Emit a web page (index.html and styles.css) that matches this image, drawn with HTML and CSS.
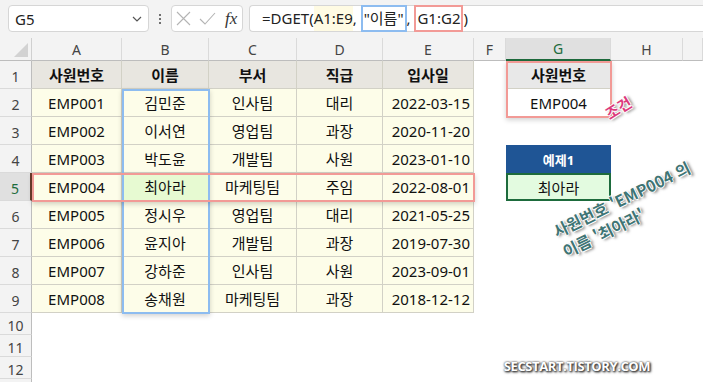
FILE: index.html
```html
<!DOCTYPE html>
<html lang="ko">
<head>
    <meta charset="UTF-8">
    <meta name="viewport" content="width=device-width">
    <title>DGET 예제</title>
    <link rel="stylesheet" href="styles.css">
</head>
<body>
<div id="app">
    <div class="toolbar">
        <div class="name-box">
            <span>G5</span>
            <svg class="chev" width="10" height="6" viewBox="0 0 10 6"><polyline points="1,1 5,5 9,1" fill="none" stroke="#555" stroke-width="1.2"/></svg>
        </div>
        <div class="dots"><span></span><span></span><span></span></div>
        <div class="fx-box">
            <svg width="15" height="15" viewBox="0 0 15 15"><path d="M1 1L14 14M14 1L1 14" stroke="#b4b4b4" stroke-width="1.1" fill="none"/></svg>
            <svg width="17" height="13" viewBox="0 0 17 13"><polyline points="1,7 6,12 16,1" stroke="#b4b4b4" stroke-width="1.1" fill="none"/></svg>
            <span class="fx">fx</span>
        </div>
        <div class="formula">
            <span>=DGET(</span><span class="ref-a">A1:E9</span><span>,&nbsp;</span><span class="ref-b">"이름"</span><span>,&nbsp;</span><span class="ref-g">G1:G2</span><span>)</span>
        </div>
    </div>

    <div class="sheet">
        <div class="corner"></div>
        <div class="ch">A</div><div class="ch">B</div><div class="ch">C</div><div class="ch">D</div><div class="ch">E</div>
        <div class="ch">F</div><div class="ch ch-sel">G</div><div class="ch">H</div><div class="ch"></div>

        <div class="rh">1</div>
        <div class="th">사원번호</div><div class="th">이름</div><div class="th">부서</div><div class="th">직급</div><div class="th">입사일</div>
        <div class="e"></div><div class="th th-g">사원번호</div><div class="e"></div><div class="e"></div>

        <div class="rh">2</div>
        <div class="td">EMP001</div><div class="td">김민준</div><div class="td">인사팀</div><div class="td">대리</div><div class="td dt">2022-03-15</div>
        <div class="e"></div><div class="crit">EMP004</div><div class="e"></div><div class="e"></div>

        <div class="rh">3</div>
        <div class="td">EMP002</div><div class="td">이서연</div><div class="td">영업팀</div><div class="td">과장</div><div class="td dt">2020-11-20</div>
        <div class="e"></div><div class="e"></div><div class="e"></div><div class="e"></div>

        <div class="rh">4</div>
        <div class="td">EMP003</div><div class="td">박도윤</div><div class="td">개발팀</div><div class="td">사원</div><div class="td dt">2023-01-10</div>
        <div class="e"></div><div class="res-h">예제1</div><div class="e"></div><div class="e"></div>

        <div class="rh rh-sel">5</div>
        <div class="td">EMP004</div><div class="td hit">최아라</div><div class="td">마케팅팀</div><div class="td">주임</div><div class="td dt">2022-08-01</div>
        <div class="e"></div><div class="res-v">최아라</div><div class="e"></div><div class="e"></div>

        <div class="rh">6</div>
        <div class="td">EMP005</div><div class="td">정시우</div><div class="td">영업팀</div><div class="td">대리</div><div class="td dt">2021-05-25</div>
        <div class="e"></div><div class="e"></div><div class="e"></div><div class="e"></div>

        <div class="rh">7</div>
        <div class="td">EMP006</div><div class="td">윤지아</div><div class="td">개발팀</div><div class="td">과장</div><div class="td dt">2019-07-30</div>
        <div class="e"></div><div class="e"></div><div class="e"></div><div class="e"></div>

        <div class="rh">8</div>
        <div class="td">EMP007</div><div class="td">강하준</div><div class="td">인사팀</div><div class="td">사원</div><div class="td dt">2023-09-01</div>
        <div class="e"></div><div class="e"></div><div class="e"></div><div class="e"></div>

        <div class="rh">9</div>
        <div class="td">EMP008</div><div class="td">송채원</div><div class="td">마케팅팀</div><div class="td">과장</div><div class="td dt">2018-12-12</div>
        <div class="e"></div><div class="e"></div><div class="e"></div><div class="e"></div>

        <div class="rh">10</div><div class="blank"></div>
        <div class="rh">11</div><div class="blank"></div>
        <div class="rh">12</div><div class="blank"></div>
        <div class="rh"></div><div class="blank"></div>
    </div>

    <!-- 선택 범위 표시 -->
    <div class="box box-name"></div>
    <div class="box box-row"></div>
    <div class="box box-crit"></div>

    <div class="tag-cond">조건</div>
    <div class="note">사원번호 'EMP004 의<br>이름 '최아라'</div>
    <div class="mark">SECSTART.TISTORY.COM</div>
</div>
</body>
</html>
```

FILE: styles.css
```css
*{
    margin: 0;
    padding: 0;
    box-sizing: border-box;
}
html,body{
    width: 100%;
    height: 100%;
    overflow: hidden;
    background: #fff;
}
#app{
    position: relative;
    width: 100%;
    height: 100%;
    font-family: "Noto Sans", "Noto Sans CJK KR", sans-serif;
    color: #111;
}

/* 수식 입력줄 */
.toolbar{
    height: 38px;
    background: #f3f3f3;
    display: flex;
    align-items: flex-start;
    padding: 5px 0 0 8px;
}
.name-box{
    width: 141px;
    height: 27px;
    background: #fff;
    border: 1px solid #d6d6d6;
    border-radius: 4px;
    display: flex;
    align-items: center;
    justify-content: space-between;
    padding: 0 6px 0 6px;
    font-size: 15px;
    color: #222;
}
.dots{
    width: 22px;
    height: 27px;
    display: flex;
    flex-direction: column;
    align-items: center;
    justify-content: center;
    gap: 2px;
}
.dots span{
    width: 2px;
    height: 2px;
    background: #444;
    border-radius: 50%;
}
.fx-box{
    width: 72px;
    height: 27px;
    background: #fff;
    border: 1px solid #d6d6d6;
    border-radius: 4px;
    display: flex;
    align-items: center;
    gap: 8px;
    padding-left: 4px;
}
.fx{
    font-family: "Liberation Serif", serif;
    font-style: italic;
    font-size: 17px;
    color: #333;
    margin-left: 1px;
}
.formula{
    flex: 1;
    height: 27px;
    margin-left: 6px;
    background: #fff;
    border: 1px solid #d6d6d6;
    border-right: none;
    border-radius: 4px 0 0 4px;
    display: flex;
    align-items: stretch;
    padding-left: 12px;
    font-size: 15px;
    line-height: 25px;
    color: #222;
}
.formula span{
    white-space: pre;
}
.ref-a{
    background: #fffbe3;
}
.ref-b{
    border: 2px solid #8dbcf0;
    margin-top: -1px;
    height: 27px;
    line-height: 23px;
    padding: 0 1px;
}
.ref-g{
    border: 2px solid #f29a96;
    margin-top: -1px;
    height: 27px;
    line-height: 23px;
    padding: 0 1px;
}

/* 시트 */
.sheet{
    display: grid;
    grid-template-columns: 32px 90px 87px 88px 86px 91px 32px 105px 72px 1fr;
    grid-template-rows: 23px repeat(9, 28px) repeat(3, 22px) 4px;
    font-size: 15px;
}
.sheet > div{
    display: flex;
    align-items: center;
    justify-content: center;
    white-space: nowrap;
}
.corner{
    background: #f3f3f3;
    border-right: 1px solid #d0d0d0;
    border-bottom: 1px solid #bdbdbd;
    position: relative;
}
.corner::after{
    content: "";
    position: absolute;
    right: 3px;
    bottom: 3px;
    border-left: 14px solid transparent;
    border-bottom: 14px solid #d2d2d2;
}
.ch{
    background: #f3f3f3;
    border-right: 1px solid #dadada;
    border-bottom: 1px solid #bdbdbd;
    font-size: 14px;
    color: #444;
}
.ch-sel{
    background: #e0e0e0;
    color: #1d6b3c;
    border-bottom: 2px solid #1d6b3c;
}
.rh{
    background: #f3f3f3;
    border-right: 1px solid #bdbdbd;
    border-bottom: 1px solid #dadada;
    font-size: 14px;
    color: #444;
    padding-top: 4px;
}
.rh-sel{
    background: #e0e0e0;
    color: #1d6b3c;
    border-right: 2px solid #6b3b2c;
}
.th{
    background: #e8e6e0;
    font-weight: bold;
    border-right: 1px solid #d2d1c6;
    border-bottom: 1px solid #d2d1c6;
}
.th-g{
    background: #e8e8e8;
    border-left: 1px solid #d2d2d2;
}
.td{
    background: #fdfde9;
    border-right: 1px solid #d2d1c6;
    border-bottom: 1px solid #d2d1c6;
}
.sheet > .dt{
    justify-content: flex-end;
    padding-right: 3px;
}
.sheet > .hit{
    background: #e7fad2;
}
.crit{
    background: #fff;
    border: 1px solid #d2d2d2;
    border-top: none;
}
.res-h{
    background: #1f5595;
    color: #fff;
    font-weight: bold;
    font-size: 13px;
}
.res-v{
    background: #e3fbe0;
    border: 2px solid #1d6b3c;
}
.blank{
    grid-column: 2 / -1;
}

/* 범위 테두리 */
.box{
    position: absolute;
    border: 2px solid;
    box-shadow: 0 2px 5px rgba(0,0,0,0.18);
    pointer-events: none;
}
.box-name{
    left: 122px;
    top: 89px;
    width: 88px;
    height: 225px;
    border-color: #8dbcf0;
}
.box-row{
    left: 32px;
    top: 173px;
    width: 443px;
    height: 29px;
    border-color: #f29a96;
}
.box-crit{
    left: 506px;
    top: 61px;
    width: 106px;
    height: 57px;
    border-color: #f29a96;
}

/* 설명 글씨 */
.tag-cond{
    position: absolute;
    left: 597px;
    top: 97px;
    width: 42px;
    text-align: center;
    font-family: "Noto Sans CJK KR", sans-serif;
    font-weight: bold;
    font-size: 15px;
    color: #dc3a7c;
    transform: rotate(-32deg);
    text-shadow: 1px 0 0 #fff, -1px 0 0 #fff, 0 1px 0 #fff, 0 -1px 0 #fff, 2px 2px 3px rgba(0,0,0,0.55);
}
.note{
    position: absolute;
    left: 549px;
    top: 222px;
    width: 180px;
    font-family: "Noto Sans CJK KR", sans-serif;
    font-weight: bold;
    font-size: 16px;
    line-height: 22px;
    color: #3f7575;
    transform-origin: 0 0;
    transform: rotate(-26deg);
    text-shadow: 1px 0 0 #fff, -1px 0 0 #fff, 0 1px 0 #fff, 0 -1px 0 #fff, 2px 2px 3px rgba(0,0,0,0.6);
}
.mark{
    position: absolute;
    left: 492px;
    top: 357px;
    width: 170px;
    text-align: center;
    font-family: "Open Sans", sans-serif;
    font-weight: bold;
    font-size: 13px;
    letter-spacing: -0.4px;
    color: #fff;
    text-shadow: 0 0 2px #444, 1px 1px 2px #333, 1px 1px 3px #555;
}
```
